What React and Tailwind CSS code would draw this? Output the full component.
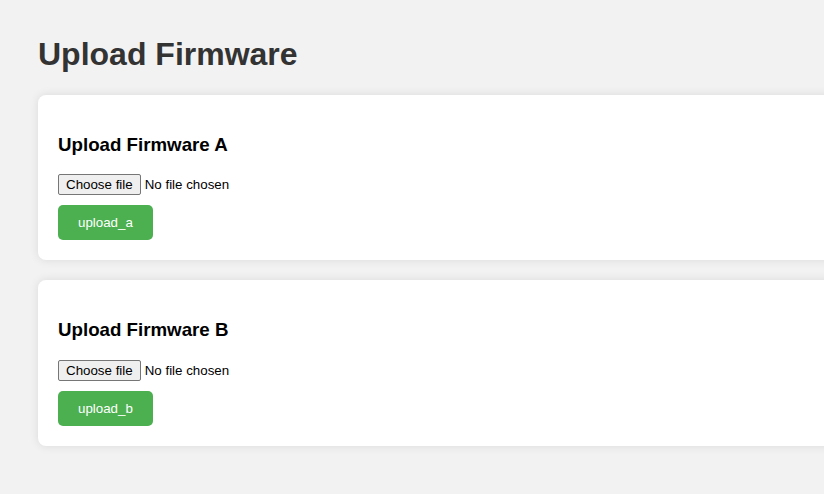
import React from 'react';

const UploadCard = ({ id, label, action }) => {
  return (
    <div className="w-[900px] bg-white rounded-[8px] shadow-[0_0_10px_rgba(0,0,0,0.1)] p-[20px] mb-[20px]">
      <h3 className="text-[18.72px] font-bold leading-[22px] text-black mt-[18.72px] mb-[18.72px]">
        {label}
      </h3>
      <form onSubmit={(e) => e.preventDefault()}>
        <label htmlFor={id} className="flex items-center h-[21px] text-[13.33px] leading-[15px] text-black">
          <input id={id} type="file" className="hidden" />
          <span className="h-[21px] flex items-center bg-[#efefef] border border-[#767676] rounded-[2px] px-[7px] mr-[4px]">
            Choose file
          </span>
          <span>No file chosen</span>
        </label>
        <button
          type="submit"
          className="mt-[10px] bg-[#4caf50] text-white text-[13.33px] leading-[15px] px-[20px] py-[10px] rounded-[5px]"
        >
          {action}
        </button>
      </form>
    </div>
  );
};

export default function App() {
  return (
    <div className="min-h-[494px] bg-[#f2f2f2] overflow-hidden font-['Liberation_Sans',Arial,sans-serif] pt-[15px] pl-[38px]">
      <h1 className="text-[32px] font-bold leading-[37px] text-[#333] mt-[21.44px] mb-[21.44px]">
        Upload Firmware
      </h1>
      <UploadCard id="fw-a" label="Upload Firmware A" action="upload_a" />
      <UploadCard id="fw-b" label="Upload Firmware B" action="upload_b" />
    </div>
  );
}
